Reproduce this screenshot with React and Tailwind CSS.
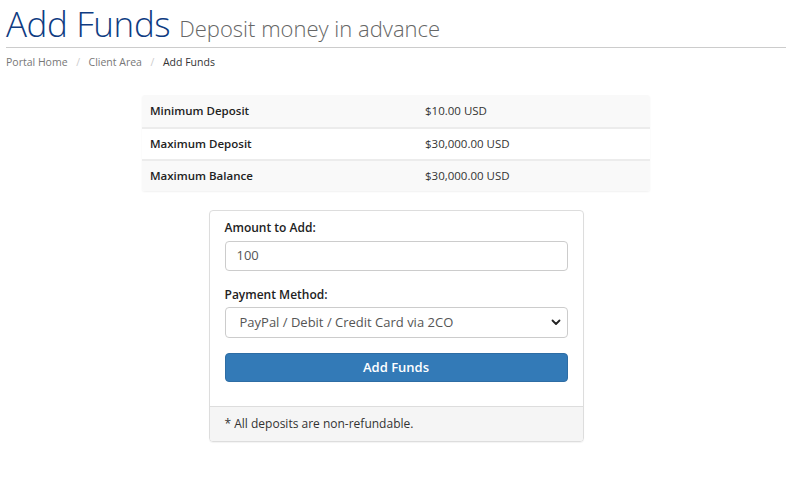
import React from 'react';

const rows = [
  ['Minimum Deposit', '$10.00 USD'],
  ['Maximum Deposit', '$30,000.00 USD'],
  ['Maximum Balance', '$30,000.00 USD'],
];

const App = () => {
  return (
    <div className="min-h-[482px] bg-white text-[#333] font-['Open_Sans',sans-serif] pl-[6px] pr-[14px]">
      {/* Header */}
      <div className="flex items-baseline gap-[9px] pt-[3px] pb-[2px] border-b border-[#ccc]">
        <h1 className="text-[35px] leading-[42px] font-light text-[#0f3c82] tracking-[-0.4px]">Add Funds</h1>
        <span className="text-[22px] leading-[30px] font-light text-[#666]">Deposit money in advance</span>
      </div>
      <div className="flex items-center mt-[7px] text-[10.5px] text-[#777]">
        <span>Portal Home</span>
        <span className="text-[#ccc] w-[21px] text-center">/</span>
        <span>Client Area</span>
        <span className="text-[#ccc] w-[21px] text-center">/</span>
        <span className="text-[#333]">Add Funds</span>
      </div>

      {/* Limits */}
      <div className="w-[508px] mx-auto mt-[24px] rounded-[3px] overflow-hidden shadow-[0_1px_2px_rgba(0,0,0,0.06)]">
        {rows.map(([label, value], i) => (
          <div
            key={label}
            className={`flex h-[32px] items-center text-[11.5px] ${i % 2 === 0 ? 'bg-[#f9f9f9]' : 'bg-white'} ${i > 0 ? 'border-t-2 border-[#ececec]' : ''}`}
          >
            <div className="w-[283px] pl-[8px] font-semibold text-[#222]">{label}</div>
            <div className="text-[#333]">{value}</div>
          </div>
        ))}
      </div>

      {/* Form */}
      <div className="w-[375px] mx-auto mt-[19px] border border-[#ddd] rounded-[4px] overflow-hidden shadow-[0_1px_1px_rgba(0,0,0,0.05)]">
        <div className="px-[15px] pt-[8px] pb-[24px]">
          <label className="block text-[12px] leading-[18px] font-semibold text-[#222] mb-[4px]">Amount to Add:</label>
          <div className="h-[30px] border border-[#ccc] rounded-[4px] flex items-center px-[11px] text-[13px] text-[#555]">100</div>
          <label className="block text-[12px] leading-[18px] font-semibold text-[#222] mt-[15px] mb-[3px]">Payment Method:</label>
          <div className="h-[31px] border border-[#ccc] rounded-[4px] flex items-center justify-between pl-[14px] pr-[6px] text-[13px] text-[#555]">
            <span>PayPal / Debit / Credit Card via 2CO</span>
            <svg width="10" height="10" viewBox="0 0 10 10" fill="none">
              <path d="M1.5 3.5 L5 7 L8.5 3.5" stroke="#222" strokeWidth="1.8" strokeLinecap="round" strokeLinejoin="round" />
            </svg>
          </div>
          <button className="mt-[15px] w-full h-[29px] bg-[#337ab7] border border-[#2e6da4] rounded-[4px] text-white text-[13px] font-semibold">
            Add Funds
          </button>
        </div>
        <div className="bg-[#f5f5f5] border-t border-[#ddd] h-[35px] flex items-center px-[15px] text-[12px] text-[#333]">
          * All deposits are non-refundable.
        </div>
      </div>
    </div>
  );
};

export default App;
